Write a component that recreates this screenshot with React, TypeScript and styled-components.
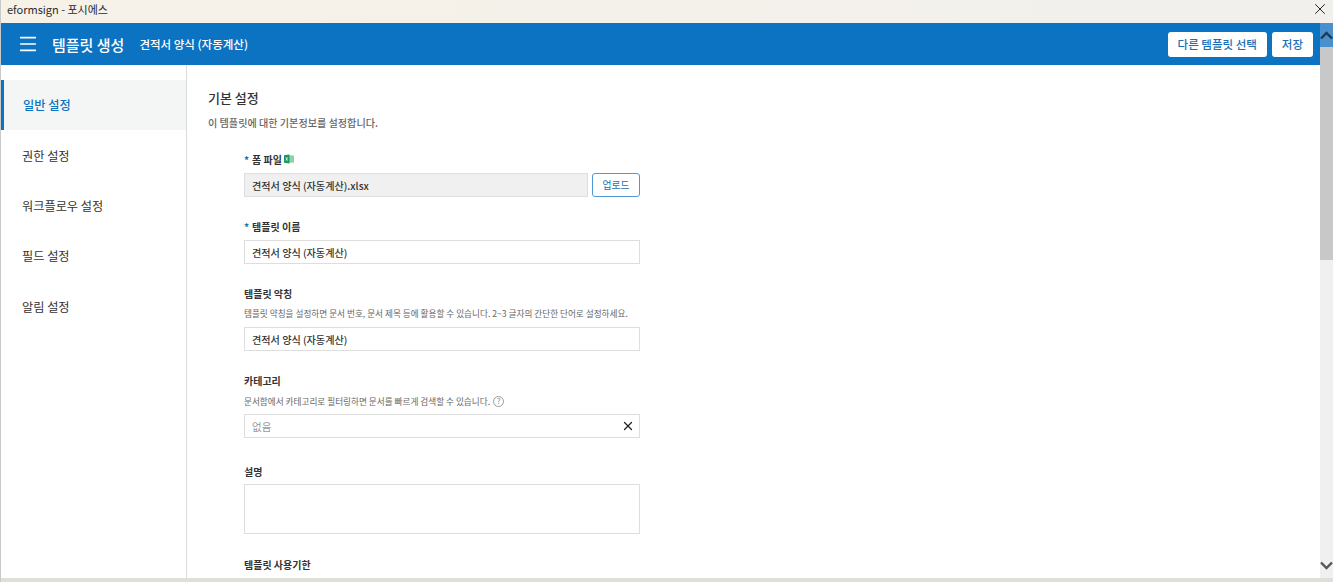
import styled, { createGlobalStyle } from "styled-components";
import { Menu, X } from "lucide-react";

const GlobalStyle = createGlobalStyle`
  html, body {
    margin: 0;
    padding: 0;
    overflow: hidden;
    background: #fff;
    font-family: "Noto Sans CJK KR", "Noto Sans", sans-serif;
  }
  * { box-sizing: border-box; }
`;

const Window = styled.div`
  display: flex;
  flex-direction: column;
  width: 1333px;
  height: 582px;
  overflow: hidden;
  border-left: 1px solid #c9c9c9;
`;

const TitleBar = styled.div`
  display: flex;
  flex: 0 0 23px;
  align-items: center;
  justify-content: space-between;
  padding: 0 4px 5px 6px;
  background: linear-gradient(90deg, #f7f2e8, #f1f0ed);
  color: #2a2a2a;
  font-size: 11px;
`;

const Workspace = styled.div`
  display: flex;
  flex: 1;
  min-height: 0;
`;

const Main = styled.div`
  display: flex;
  flex: 1;
  flex-direction: column;
  min-width: 0;
`;

const Header = styled.header`
  display: flex;
  flex: 0 0 42px;
  align-items: center;
  padding: 0 7px 0 16px;
  background: #0c73c2;
  color: #fff;
`;

const HeaderTitle = styled.h1`
  margin: 0 15px 0 13px;
  font-size: 15px;
  font-weight: 500;
`;

const HeaderSubtitle = styled.span`
  flex: 1;
  font-size: 11.5px;
  font-weight: 500;
`;

const HeaderButton = styled.button`
  height: 25px;
  margin-left: 5px;
  padding: 0 10px;
  border: 0;
  border-radius: 3px;
  background: #fff;
  color: #1b6fb5;
  font-family: inherit;
  font-size: 11.5px;
  font-weight: 500;
`;

const Body = styled.div`
  display: flex;
  flex: 1;
  min-height: 0;
`;

const Sidebar = styled.nav`
  flex: 0 0 186px;
  padding-top: 15px;
  border-right: 1px solid #dcdcdc;
`;

const NavItem = styled.div<{ $active?: boolean }>`
  display: flex;
  align-items: center;
  height: 50.4px;
  padding-left: ${(p) => (p.$active ? "19px" : "21px")};
  padding-bottom: ${(p) => (p.$active ? "1px" : "0")};
  border-left: ${(p) => (p.$active ? "3px solid #0c73c2" : "0")};
  background: ${(p) => (p.$active ? "#f4f6f6" : "transparent")};
  color: ${(p) => (p.$active ? "#0c73c2" : "#333")};
  font-size: 12.2px;
  font-weight: ${(p) => (p.$active ? 500 : 400)};
`;

const Content = styled.main`
  flex: 1;
  overflow: hidden;
  padding: 23px 0 0 21px;
`;

const SectionTitle = styled.h2`
  margin: 0;
  color: #333;
  font-size: 13px;
  font-weight: 500;
  line-height: 20px;
`;

const SectionDesc = styled.p`
  margin: 7px 0 0;
  color: #666;
  font-size: 10.1px;
  font-weight: 500;
  line-height: 16px;
`;

const Form = styled.div`
  display: flex;
  flex-direction: column;
  width: 396px;
  margin: 20px 0 0 36px;
`;

const Field = styled.div<{ $gap?: number }>`
  margin-bottom: ${(p) => p.$gap ?? 21}px;
`;

const Label = styled.label<{ $tight?: boolean }>`
  display: flex;
  align-items: center;
  height: 16px;
  margin-bottom: ${(p) => (p.$tight ? 5 : 6)}px;
  color: #333;
  font-size: 10px;
  font-weight: 700;
`;

const Required = styled.span`
  margin-right: 3px;
  color: #0c73c2;
`;

const Hint = styled.p`
  display: flex;
  align-items: center;
  margin: -1px 0 7px;
  color: #666;
  font-size: 8.65px;
  line-height: 14px;
  white-space: nowrap;
`;

const CategoryHint = styled(Hint)`
  margin: 0 0 6px;
`;

const HelpIcon = styled.span`
  display: inline-flex;
  align-items: center;
  justify-content: center;
  width: 11px;
  height: 11px;
  margin-left: 3px;
  border: 1px solid #999;
  border-radius: 50%;
  color: #888;
  font-size: 8px;
`;

const ClearIcon = styled(X)`
  margin-right: -2.5px;
  color: #222;
`;

const InputRow = styled.div`
  display: flex;
  gap: 4px;
`;

const TextBox = styled.div<{ $readOnly?: boolean; $placeholder?: boolean }>`
  display: flex;
  flex: 1;
  align-items: center;
  justify-content: space-between;
  height: 24px;
  padding: 0 7px;
  border: 1px solid #dedede;
  background: ${(p) => (p.$readOnly ? "#f0f0f0" : "#fff")};
  color: ${(p) => (p.$placeholder ? "#999" : "#333")};
  font-size: ${(p) => (p.$placeholder ? 10.5 : 10.1)}px;
  font-weight: ${(p) => (p.$placeholder ? 400 : 500)};
`;

const TextArea = styled.div`
  height: 50px;
  border: 1px solid #dedede;
`;

const UploadButton = styled.button`
  flex: 0 0 48px;
  height: 24px;
  padding: 0;
  border: 1px solid #4f9ad6;
  border-radius: 3px;
  background: #fff;
  color: #1b6fb5;
  font-family: inherit;
  font-size: 9.8px;
`;

const ScrollTrack = styled.div`
  display: flex;
  flex: 0 0 13px;
  flex-direction: column;
  background: #f0f0f0;
`;

const ScrollUp = styled.div`
  display: flex;
  flex: 0 0 24px;
  align-items: center;
  justify-content: center;
  background: #4a90cc;
  color: #1e3a55;
`;

const ScrollThumb = styled.div`
  flex: 0 0 213px;
  background: #c8c8c8;
`;

const ScrollDown = styled.div`
  display: flex;
  flex: 1;
  align-items: flex-end;
  justify-content: center;
  padding-bottom: 8px;
  color: #555;
`;

const BottomStrip = styled.div`
  flex: 0 0 4px;
  background: #e0ded8;
`;

const ExcelGlyph = styled.svg`
  margin-left: 2px;
`;

function ExcelIcon() {
  return (
    <ExcelGlyph width="10" height="10" viewBox="0 0 11 10">
      <rect x="4" y="1" width="7" height="8" fill="#8fd0ae" />
      <path d="M0 1 L6 0 V10 L0 9 Z" fill="#1d9a5b" />
      <path d="M2 3.2 L4 6.8 M4 3.2 L2 6.8" stroke="#fff" strokeWidth="0.8" />
    </ExcelGlyph>
  );
}

function ScrollArrow({ up }: { up?: boolean }) {
  return (
    <svg width="13" height="9" viewBox="0 0 13 9">
      <path
        d={up ? "M1 7.5 L6.5 2 L12 7.5" : "M1 1.5 L6.5 7 L12 1.5"}
        fill="none"
        stroke="currentColor"
        strokeWidth="2.4"
      />
    </svg>
  );
}

const navItems = ["권한 설정", "워크플로우 설정", "필드 설정", "알림 설정"];

function App() {
  return (
    <Window>
      <GlobalStyle />
      <TitleBar>
        <span>eformsign - 포시에스</span>
        <X size={18} strokeWidth={1.3} color="#222" />
      </TitleBar>
      <Workspace>
        <Main>
          <Header>
            <Menu size={22} strokeWidth={1.8} />
            <HeaderTitle>템플릿 생성</HeaderTitle>
            <HeaderSubtitle>견적서 양식 (자동계산)</HeaderSubtitle>
            <HeaderButton>다른 템플릿 선택</HeaderButton>
            <HeaderButton>저장</HeaderButton>
          </Header>
          <Body>
            <Sidebar>
              <NavItem $active>일반 설정</NavItem>
              {navItems.map((item) => (
                <NavItem key={item}>{item}</NavItem>
              ))}
            </Sidebar>
            <Content>
              <SectionTitle>기본 설정</SectionTitle>
              <SectionDesc>이 템플릿에 대한 기본정보를 설정합니다.</SectionDesc>
              <Form>
                <Field>
                  <Label>
                    <Required>*</Required>폼 파일
                    <ExcelIcon />
                  </Label>
                  <InputRow>
                    <TextBox $readOnly>견적서 양식 (자동계산).xlsx</TextBox>
                    <UploadButton>업로드</UploadButton>
                  </InputRow>
                </Field>
                <Field>
                  <Label>
                    <Required>*</Required>템플릿 이름
                  </Label>
                  <TextBox>견적서 양식 (자동계산)</TextBox>
                </Field>
                <Field>
                  <Label>템플릿 약칭</Label>
                  <Hint>
                    템플릿 약칭을 설정하면 문서 번호, 문서 제목 등에 활용할 수 있습니다. 2~3 글자의 간단한 단어로 설정하세요.
                  </Hint>
                  <TextBox>견적서 양식 (자동계산)</TextBox>
                </Field>
                <Field $gap={25}>
                  <Label>카테고리</Label>
                  <CategoryHint>
                    문서함에서 카테고리로 필터링하면 문서를 빠르게 검색할 수 있습니다.
                    <HelpIcon>?</HelpIcon>
                  </CategoryHint>
                  <TextBox $placeholder>
                    없음
                    <ClearIcon size={14} strokeWidth={2.2} />
                  </TextBox>
                </Field>
                <Field $gap={22}>
                  <Label $tight>설명</Label>
                  <TextArea />
                </Field>
                <Field>
                  <Label>템플릿 사용기한</Label>
                </Field>
              </Form>
            </Content>
          </Body>
        </Main>
        <ScrollTrack>
          <ScrollUp>
            <ScrollArrow up />
          </ScrollUp>
          <ScrollThumb />
          <ScrollDown>
            <ScrollArrow />
          </ScrollDown>
        </ScrollTrack>
      </Workspace>
      <BottomStrip />
    </Window>
  );
}

export default App;
